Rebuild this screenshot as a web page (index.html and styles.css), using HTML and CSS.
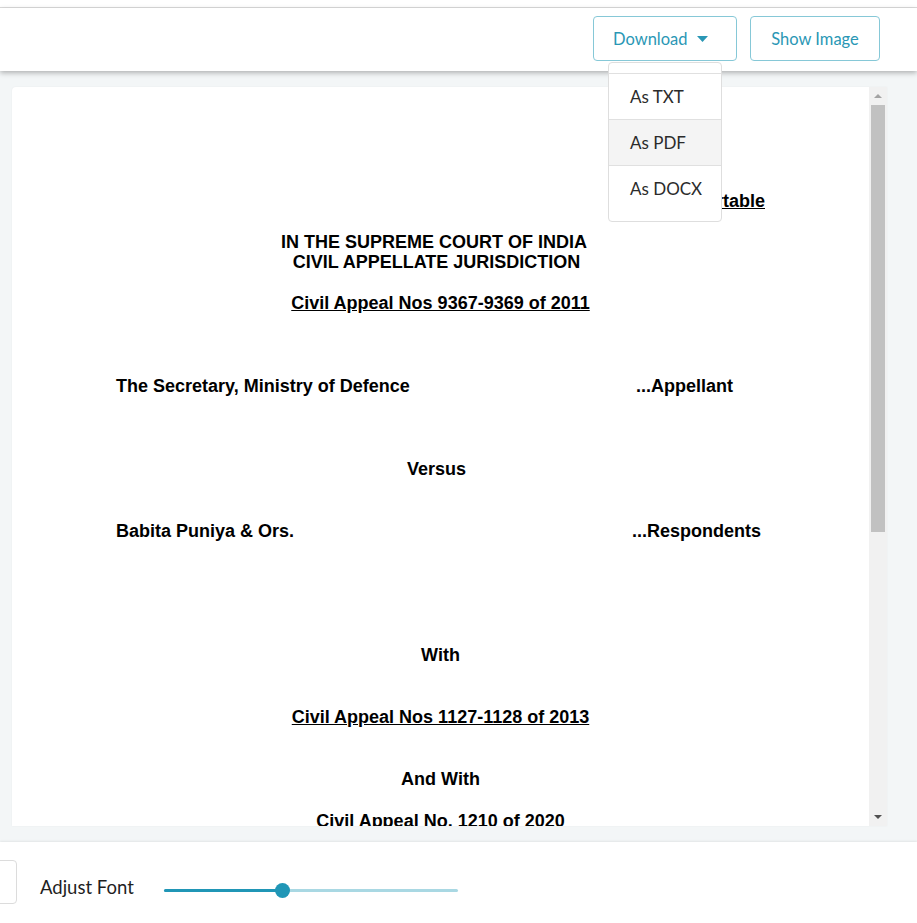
FILE: index.html
```html
<!DOCTYPE html>
<html lang="en">
<head>
<meta charset="utf-8">
<title>Judgment Viewer</title>
<link rel="stylesheet" href="styles.css">
</head>
<body>
<div class="topstrip"></div>
<header class="toolbar">
  <div class="dl-wrap">
    <button class="btn btn-download">Download
      <svg class="caret" width="11" height="6" viewBox="0 0 11 6"><polygon points="0,0 11,0 5.5,6" fill="#2a97b5"/></svg>
    </button>
    <ul class="menu">
      <li class="menu-item">As TXT</li>
      <li class="menu-item is-hover">As PDF</li>
      <li class="menu-item">As DOCX</li>
    </ul>
  </div>
  <button class="btn btn-show">Show Image</button>
</header>
<main class="viewer">
  <div class="panel">
    <div class="doc">
      <div class="line rep u">Reportable</div>
      <div class="line center head">IN THE SUPREME COURT OF INDIA</div>
      <div class="line center head head-2">CIVIL APPELLATE JURISDICTION</div>
      <div class="line center u gap-20">Civil Appeal Nos 9367-9369 of 2011</div>
      <div class="line party gap-60"><span>The Secretary, Ministry of Defence</span><span>...Appellant</span></div>
      <div class="line center versus gap-60">Versus</div>
      <div class="line party party-resp gap-39"><span>Babita Puniya &amp; Ors.</span><span>...Respondents</span></div>
      <div class="line center gap-101">With</div>
      <div class="line center u gap-39">Civil Appeal Nos 1127-1128 of 2013</div>
      <div class="line center gap-39">And With</div>
      <div class="line center gap-19">Civil Appeal No. 1210 of 2020</div>
      <div class="line center gap-40">J U D G M E N T</div>
      <div class="line gap-40">Dr Dhananjaya Y Chandrachud, J</div>
    </div>
    <div class="scrollbar">
      <div class="sb-btn"><svg width="8" height="4" viewBox="0 0 8 4"><polygon points="0,4 4,0 8,4" fill="#a3a3a3"/></svg></div>
      <div class="sb-thumb"></div>
      <div class="sb-space"></div>
      <div class="sb-btn"><svg width="8" height="4" viewBox="0 0 8 4"><polygon points="0,0 8,0 4,4" fill="#505050"/></svg></div>
    </div>
  </div>
</main>
<footer class="footer">
  <div class="edge-box"></div>
  <span class="label">Adjust Font</span>
  <div class="slider">
    <div class="track"></div>
    <div class="fill" style="width:118px"></div>
    <div class="thumb" style="left:111px"></div>
  </div>
</footer>
</body>
</html>
```
FILE: styles.css
```css
html, body {
  margin: 0;
  padding: 0;
}
body {
  width: 917px;
  height: 923px;
  overflow: hidden;
  background: #fff;
  font-family: Lato, "Open Sans", sans-serif;
  color: #222;
}
.topstrip {
  height: 7px;
  border-bottom: 1px solid #dcdcdc;
  background: #fff;
}
.toolbar {
  height: 63px;
  box-sizing: border-box;
  padding: 8px 37px 0 0;
  display: flex;
  justify-content: flex-end;
  align-items: flex-start;
  gap: 13px;
  background: #fff;
  position: relative;
  z-index: 2;
  box-shadow: 0 2px 5px rgba(0, 0, 0, 0.28);
}
.btn {
  height: 45px;
  box-sizing: border-box;
  border: 1px solid #86c8d7;
  border-radius: 4px;
  background: #fff;
  color: #2a97b5;
  font-family: Lato, "Open Sans", sans-serif;
  font-size: 16.5px;
  display: flex;
  align-items: center;
  padding: 0;
  margin: 0;
}
.btn-download {
  width: 144px;
  padding-left: 19px;
}
.caret {
  margin-left: 9px;
}
.btn-show {
  width: 130px;
  justify-content: center;
}
.dl-wrap {
  position: relative;
}
.menu {
  position: absolute;
  left: 15px;
  top: 46px;
  width: 114px;
  box-sizing: border-box;
  margin: 0;
  padding: 10px 0;
  list-style: none;
  background: #fff;
  border: 1px solid #dedede;
  border-radius: 4px;
  z-index: 3;
}
.menu-item {
  height: 46px;
  box-sizing: border-box;
  border-top: 1px solid #e0e0e0;
  padding-left: 21px;
  line-height: 45px;
  font-size: 17px;
  color: #2b2b2b;
}
.menu-item.is-hover {
  background: #f4f4f4;
}
.viewer {
  height: 771px;
  box-sizing: border-box;
  background: #f3f6f7;
  padding: 16px 30px 16px 12px;
}
.panel {
  height: 739px;
  display: flex;
  background: #fff;
  border-radius: 4px 0 0 0;
  overflow: hidden;
  box-shadow: 0 0 2px rgba(0, 0, 0, 0.06);
}
.doc {
  flex: 1;
  overflow: hidden;
  padding: 103px 104px 0;
  font-family: "Liberation Sans", Arial, sans-serif;
  font-weight: bold;
  font-size: 18px;
  line-height: 23px;
  color: #000;
}
.line {
  white-space: nowrap;
}
.rep {
  text-align: right;
  margin-bottom: 19px;
}
.u {
  text-decoration: underline;
}
.center {
  text-align: center;
}
.head {
  line-height: 20px;
  padding-right: 13px;
}
.head-2 {
  padding-right: 8px;
}
.versus {
  padding-right: 8px;
}
.party {
  display: grid;
  grid-template-columns: 520px auto;
}
.party-resp {
  grid-template-columns: 516px auto;
}
.gap-19 { margin-top: 19px; }
.gap-20 { margin-top: 20px; }
.gap-39 { margin-top: 39px; }
.gap-40 { margin-top: 40px; }
.gap-60 { margin-top: 60px; }
.gap-101 { margin-top: 101px; }
.scrollbar {
  width: 18px;
  flex: none;
  background: #f1f1f1;
  display: flex;
  flex-direction: column;
}
.sb-btn {
  height: 18px;
  flex: none;
  display: flex;
  align-items: center;
  justify-content: center;
}
.sb-thumb {
  height: 427px;
  margin: 0 2px;
  background: #c1c1c1;
  flex: none;
}
.sb-space {
  flex: 1;
}
.footer {
  height: 81px;
  box-sizing: border-box;
  padding-top: 18px;
  display: flex;
  align-items: flex-start;
  background: #fff;
  position: relative;
  box-shadow: 0 -1px 2px rgba(0, 0, 0, 0.07);
}
.edge-box {
  width: 40px;
  height: 44px;
  box-sizing: border-box;
  margin-left: -23px;
  border: 1px solid #dcdcdc;
  border-radius: 4px;
  flex: none;
}
.label {
  width: 124px;
  margin-left: 23px;
  margin-top: 15px;
  font-size: 18.5px;
  line-height: 24px;
  color: #1f1f1f;
  flex: none;
}
.slider {
  position: relative;
  width: 294px;
  height: 15px;
  margin-top: 23px;
  flex: none;
}
.track {
  position: absolute;
  left: 0;
  right: 0;
  top: 6px;
  height: 3px;
  border-radius: 2px;
  background: #a9d8e3;
}
.fill {
  position: absolute;
  left: 0;
  top: 6px;
  height: 3px;
  border-radius: 2px;
  background: #2096b6;
}
.thumb {
  position: absolute;
  top: 0;
  width: 15px;
  height: 15px;
  border-radius: 50%;
  background: #2096b6;
}
```
